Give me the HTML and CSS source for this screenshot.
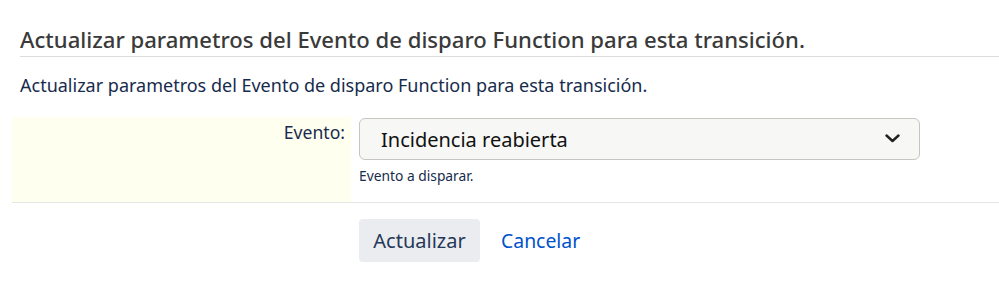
FILE: index.html
```html
<!DOCTYPE html>
<html lang="es">
<head>
<meta charset="utf-8">
<title>Actualizar parametros</title>
<link rel="stylesheet" href="styles.css">
</head>
<body>
<div class="page">
  <h2 class="title">Actualizar parametros del Evento de disparo Function para esta transición.</h2>
  <p class="desc">Actualizar parametros del Evento de disparo Function para esta transición.</p>
  <div class="row">
    <div class="label-cell"><label class="label">Evento:</label></div>
    <div class="field-cell">
      <div class="select">
        <span class="select-text">Incidencia reabierta</span>
        <svg class="chev" width="15" height="9" viewBox="0 0 15 9"><path d="M1.5 1.5 L7.5 7 L13.5 1.5" fill="none" stroke="#222" stroke-width="2.4" stroke-linecap="round" stroke-linejoin="round"/></svg>
      </div>
      <div class="help">Evento a disparar.</div>
    </div>
  </div>
  <div class="actions">
    <button class="btn">Actualizar</button>
    <a class="link" href="#">Cancelar</a>
  </div>
</div>
</body>
</html>
```
FILE: styles.css
```css
html, body { margin: 0; padding: 0; background: #fff; }
body { font-family: "Noto Sans", "Open Sans", sans-serif; color: #172b4d; }
.page { padding: 0 0 0 12px; }
.title {
  margin: 0 0 0 8px;
  padding-top: 27px;
  padding-bottom: 4px;
  font-size: 22.1px;
  line-height: 25px;
  font-weight: 500;
  color: #3a3a3a;
  border-bottom: 1px solid #dcdcdc;
}
.desc {
  margin: 0 0 0 8px;
  padding-top: 16px;
  font-size: 18px;
  line-height: 24px;
  color: #172b4d;
}
.row {
  margin-top: 20px;
  display: grid;
  grid-template-columns: 339px 1fr;
  border-bottom: 1px solid #e6e6e6;
  height: 86px;
  box-sizing: border-box;
}
.label-cell {
  background: #fffff0;
  text-align: right;
  padding: 3px 6px 0 0;
}
.label { font-size: 17.6px; line-height: 24px; color: #172b4d; }
.field-cell { padding: 1px 0 0 8px; }
.select {
  width: 561px;
  height: 42px;
  box-sizing: border-box;
  border: 1px solid #c8c5c0;
  border-radius: 6px;
  background: #f7f7f5;
  display: flex;
  align-items: center;
  justify-content: space-between;
  padding: 0 19px 0 21px;
}
.select-text { font-size: 20px; color: #111; }
.chev { display: block; margin-top: -2px; }
.help { margin-top: 8px; font-size: 13.8px; line-height: 16px; color: #172b4d; }
.actions {
  display: flex;
  align-items: center;
  gap: 21px;
  padding: 16px 0 0 347px;
}
.btn {
  font-family: inherit;
  font-size: 20px;
  color: #253858;
  background: #ebecf0;
  border: none;
  border-radius: 4px;
  height: 43px;
  width: 121px;
  padding: 0;
}
.link { font-size: 19.4px; color: #0052cc; text-decoration: none; }
```
